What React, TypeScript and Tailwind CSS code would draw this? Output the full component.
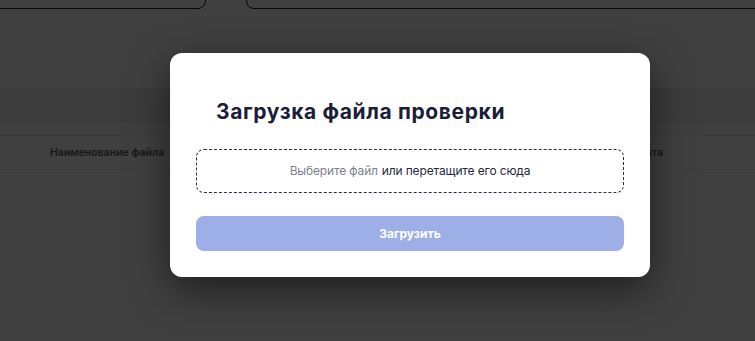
import React from 'react';

const UploadModal: React.FC = () => {
  return (
    <div className="w-[480px] rounded-xl bg-white px-[26px] pt-[45px] pb-[26px] shadow-[0_12px_40px_rgba(0,0,0,0.55)]">
      <h2 className="pl-5 text-[21px] font-bold leading-[28px] tracking-[0.62px] text-[#1b1d3a]">
        Загрузка файла проверки
      </h2>
      <div className="mt-[23px] flex h-[44px] items-center justify-center rounded-lg border border-dashed border-[#2b2d45] text-[12px] tracking-[-0.15px]">
        <span className="text-[#7d808c]">Выберите файл</span>
        <span className="ml-1 text-[#26283d]">или перетащите его сюда</span>
      </div>
      <button className="mt-[23px] flex h-[35px] w-full items-center justify-center rounded-lg bg-[#9eaee6] text-[12px] font-bold text-white">
        Загрузить
      </button>
    </div>
  );
};

const App: React.FC = () => {
  return (
    <div className="relative h-[341px] w-full overflow-hidden bg-white font-['Inter','Noto_Sans',sans-serif]">
      {/* page underneath */}
      <div className="flex flex-col">
        <div className="-mt-[31px] flex gap-10">
          <div className="-ml-3 h-[40px] w-[218px] rounded-lg border border-[#1c1c1c] bg-white" />
          <div className="-mr-4 h-[40px] flex-1 rounded-lg border border-[#1c1c1c] bg-white" />
        </div>
        <div className="mt-[79px] h-[35px] bg-[#f0f0f0]" />
        <div className="h-[12px] bg-[#fbfbfb]" />
        <div className="flex h-[35px] items-center border-y border-[#e6e6e6] text-[10.5px] font-semibold text-[#5e5e5e]">
          <span className="ml-[50px]">Наименование файла</span>
          <span className="ml-auto mr-[92px]">Дата</span>
        </div>
      </div>

      {/* overlay */}
      <div className="absolute inset-0 bg-black/75">
        <div className="pl-[170px] pt-[53px]">
          <UploadModal />
        </div>
      </div>
    </div>
  );
};

export default App;
